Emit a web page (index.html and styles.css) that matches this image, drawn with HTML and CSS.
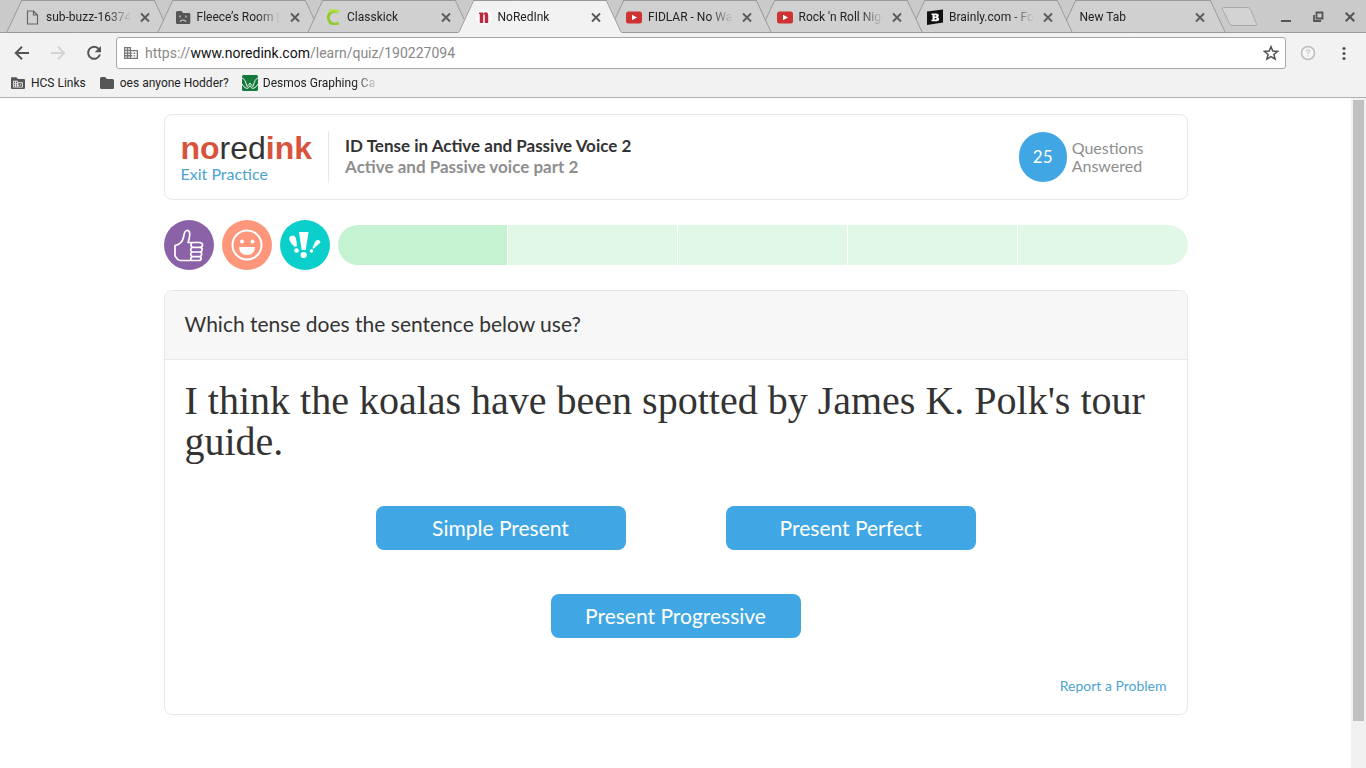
FILE: index.html
```html
<!DOCTYPE html>
<html lang="en">
<head>
<meta charset="utf-8">
<title>NoRedInk</title>
<link rel="stylesheet" href="styles.css">
</head>
<body>
<svg class="defs" aria-hidden="true">
  <symbol id="close" viewBox="0 0 16 16"><path d="M4 4.500l8 8M12 4.500l-8 8" fill="none" stroke="#5a5a5a" stroke-width="1.800"/></symbol>
  <symbol id="youtube" viewBox="0 0 16 16"><rect y="2.500" width="16" height="12" rx="2.500" fill="#cf3233"/><path d="M6 5.700v5.500l5-2.700z" fill="#fff"/></symbol>
</svg>
<header class="browser">
  <div class="strip">
    <nav class="tabs" aria-label="Tabs">
      <div class="tab level-1">
        <svg class="icon" viewBox="0 0 16 16"><path d="M3.500 2h6l4 4v9h-10zM9.500 2v4h4" fill="none" stroke="#666" stroke-width="1.200"/></svg>
        <a class="tab-title" href="#">sub-buzz-16374</a>
        <button class="icon-button" aria-label="Close tab"><svg class="icon"><use href="#close"/></svg></button>
      </div>
      <div class="tab level-2">
        <svg class="icon" viewBox="0 0 16 16"><path d="M1 3.500q0-1.500 1.500-1.500h4l1.500 2h6q1.300 0 1.300 1.300V14q0 1-1.300 1H2.300Q1 15 1 13.700z" fill="#555"/><path d="M5 6.500v2M11 6.500v2M5 12.500q3-3 6 0" fill="none" stroke="#ddd" stroke-width="1.100"/></svg>
        <a class="tab-title" href="#">Fleece’s Room |</a>
        <button class="icon-button" aria-label="Close tab"><svg class="icon"><use href="#close"/></svg></button>
      </div>
      <div class="tab level-3">
        <svg class="icon" viewBox="0 0 16 16"><path d="M13.500 3.200A6.500 6.500 0 1 0 13.500 14" fill="none" stroke="#8fcb2c" stroke-width="3"/><path d="M13.500 3.200A6.500 6.500 0 0 0 4 3" fill="none" stroke="#b3e04c" stroke-width="2.500"/></svg>
        <a class="tab-title" href="#">Classkick</a>
        <button class="icon-button" aria-label="Close tab"><svg class="icon"><use href="#close"/></svg></button>
      </div>
      <div class="tab active">
        <svg class="icon" viewBox="0 0 16 16"><circle cx="8" cy="8.500" r="8" fill="#fafafa"/><path d="M4 3.500h3v1.300q.8-1.600 2.500-1.600Q12.200 3.200 12.200 6.500V14H8.800V6.500Q8.800 5 8 5T7.200 6.500V14H3.800V5H3V3.500z" fill="#b9293c"/></svg>
        <a class="tab-title" href="#">NoRedInk</a>
        <button class="icon-button" aria-label="Close tab"><svg class="icon"><use href="#close"/></svg></button>
      </div>
      <div class="tab level-3">
        <svg class="icon"><use href="#youtube"/></svg>
        <a class="tab-title" href="#">FIDLAR - No Wa</a>
        <button class="icon-button" aria-label="Close tab"><svg class="icon"><use href="#close"/></svg></button>
      </div>
      <div class="tab level-2">
        <svg class="icon"><use href="#youtube"/></svg>
        <a class="tab-title" href="#">Rock 'n Roll Nigg</a>
        <button class="icon-button" aria-label="Close tab"><svg class="icon"><use href="#close"/></svg></button>
      </div>
      <div class="tab level-1">
        <svg class="icon" viewBox="0 0 16 16"><path d="M0 2.500L16 .5v13L0 16z" fill="#111"/><path d="M4.500 4.500h5q2.300 0 2.300 2 0 1.300-1 1.700 1.400.4 1.400 1.900 0 2.200-2.500 2.200H4.500v-1.500h1V6h-1zM7.600 6.200v1.400h1q.8 0 .8-.7t-.8-.7zM7.600 9v1.500h1.200q.8 0 .8-.7T8.800 9z" fill="#fff" fill-rule="evenodd"/></svg>
        <a class="tab-title" href="#">Brainly.com - Fo</a>
        <button class="icon-button" aria-label="Close tab"><svg class="icon"><use href="#close"/></svg></button>
      </div>
      <div class="tab level-0">
        <a class="tab-title" href="#">New Tab</a>
        <button class="icon-button" aria-label="Close tab"><svg class="icon"><use href="#close"/></svg></button>
      </div>
    </nav>
    <button class="new-tab" aria-label="New tab"><svg width="40" height="22" viewBox="0 0 40 22"><path d="M3.500 1.500h24q2 0 3 2l6 14q1 2-1 2h-23q-2 0-3-2l-7-14q-1-2 1-2z" fill="#d3d3d3" stroke="#a9a9a9"/></svg></button>
    <div class="window-controls">
      <button class="icon-button" aria-label="Minimize"><svg class="icon" viewBox="0 0 16 16"><path d="M3 12h10" stroke="#555" stroke-width="2"/></svg></button>
      <button class="icon-button" aria-label="Restore"><svg class="icon" viewBox="0 0 16 16"><path d="M6.500 3.500h6v6h-6zM4 6v6h7" fill="none" stroke="#555" stroke-width="1.800"/></svg></button>
      <button class="icon-button" aria-label="Close window"><svg class="icon" viewBox="0 0 16 16"><path d="M3.700 3.700l8.600 8.600M12.300 3.700l-8.600 8.600" stroke="#555" stroke-width="2"/></svg></button>
    </div>
  </div>
  <div class="toolbar">
    <button class="tool" aria-label="Back"><svg width="16" height="16" viewBox="0 0 16 16"><path d="M15 8H2M8 1.800L1.800 8 8 14.200" fill="none" stroke="#555" stroke-width="2"/></svg></button>
    <button class="tool" aria-label="Forward" disabled><svg width="16" height="16" viewBox="0 0 16 16"><path d="M1 8h13M8 1.800L14.200 8 8 14.200" fill="none" stroke="#d3d3d3" stroke-width="2"/></svg></button>
    <button class="tool" aria-label="Reload"><svg width="16" height="16" viewBox="0 0 16 16"><path d="M12.800 4A6 6 0 1 0 13.900 9.500" fill="none" stroke="#555" stroke-width="2"/><path d="M15 1v6.300H8.700z" fill="#555"/></svg></button>
    <div class="omnibox">
      <svg class="icon" viewBox="0 0 16 16"><path d="M1 2h7v3h7v9H1z" fill="#777"/><path d="M2.200 3.300h1.600v1.400H2.200zM5.200 3.300h1.600v1.400H5.200zM2.200 6h1.600v1.400H2.200zM5.200 6h1.600v1.400H5.200zM2.200 8.700h1.600v1.400H2.200zM5.200 8.700h1.600v1.400H5.200zM2.200 11.400h1.600v1.400H2.200zM5.200 11.400h1.600v1.400H5.200zM8 6.300h5.700v6.400H8v-1.300h1.300v-1.300H8V8.700h1.300V7.400H8z" fill="#fff"/><path d="M10.700 7.600h1.500v1.400h-1.500zM10.700 10.200h1.500v1.400h-1.500z" fill="#777"/></svg>
      <a class="url" href="#">https://<strong>www.noredink.com</strong>/learn/quiz/190227094</a>
      <button class="icon-button" aria-label="Bookmark this page"><svg class="icon" viewBox="0 0 16 16"><path d="M8 1.700l1.800 4.400 4.700.4-3.600 3 1.200 4.600L8 11.600l-4.100 2.500 1.200-4.600-3.600-3 4.700-.4z" fill="none" stroke="#505050" stroke-width="1.500"/></svg></button>
    </div>
    <button class="tool" aria-label="Extension"><svg width="16" height="16" viewBox="0 0 16 16"><circle cx="8" cy="8" r="6.500" fill="#f5f5f5" stroke="#bbb" stroke-width="1.500"/><path d="M6.300 6.500q0-1.700 1.700-1.700t1.700 1.500Q9.700 7.500 8 8.200v1M8 10.300v1.200" fill="none" stroke="#bbb"/></svg></button>
    <button class="tool" aria-label="Menu"><svg width="16" height="16" viewBox="0 0 16 16"><g fill="#555"><circle cx="8" cy="3.500" r="1.600"/><circle cx="8" cy="8.500" r="1.600"/><circle cx="8" cy="13.500" r="1.600"/></g></svg></button>
  </div>
  <nav class="bookmarks" aria-label="Bookmarks">
    <a href="#"><svg class="icon" viewBox="0 0 16 16"><path d="M1 3.200Q1 2.200 2 2.200h4.500L8 4h6q1 0 1 1v8q0 1-1 1H2q-1 0-1-1z" fill="#555"/><path d="M3.200 5.800h4.600v1.500h5v5.200H3.200z" fill="#f2f2f2"/><path d="M4 6.800h1.200v1.100H4zM6 6.800h1.200v1.100H6zM4 8.700h1.200v1.100H4zM6 8.700h1.200v1.100H6zM4 10.600h1.200v1.100H4zM6 10.600h1.200v1.100H6zM8.200 8.300h3.700v3.400H8.200v-1h1v-.9h-1z" fill="#555"/><path d="M10 9.300h1v1.200h-1z" fill="#f2f2f2"/></svg>HCS Links</a>
    <a href="#"><svg class="icon" viewBox="0 0 16 16"><path d="M1 3.500Q1 2 2.500 2h3.700L8 4h5.500Q15 4 15 5.500v7q0 1.500-1.500 1.500h-11Q1 14 1 12.500z" fill="#555"/></svg>oes anyone Hodder?</a>
    <a href="#"><svg class="icon" viewBox="0 0 16 16"><rect width="16" height="16" rx="1.500" fill="#16793c"/><path d="M0 3q3 .5 5 8.500Q6.500 10.500 8 8q1.500 2.500 3 3.500Q13 3.500 16 3M0 9q2 4 5 4.500Q7 13 8 10.500q1 2.500 3 3Q14 13 16 9" fill="none" stroke="#e4f3e8" stroke-width="1"/></svg><span class="fade">Desmos Graphing Ca</span></a>
  </nav>
</header>
<div class="viewport">
  <main class="page">
    <header class="card lesson">
      <div class="brand">
        <div class="logo"><b>no</b>red<b>ink</b></div>
        <a href="#">Exit Practice</a>
      </div>
      <div class="lesson-text">
        <h1>ID Tense in Active and Passive Voice 2</h1>
        <p>Active and Passive voice part 2</p>
      </div>
      <div class="answered"><span class="count">25</span><span>Questions<br>Answered</span></div>
    </header>
    <section class="progress" aria-label="Progress">
      <svg class="badge" viewBox="0 0 50 50"><circle cx="25" cy="25" r="25" fill="#8b61a8"/><path d="M11 25.500q7-1.500 8.500-8 .8-6.500 3.200-7 3.300-.5 3 4.500-.2 3.500-1.700 7.500h12q2.500.5 2.500 2.500t-2.500 2.300q2.300.5 2.200 2.400t-2.300 2.300q1.900.5 1.800 2.300t-1.900 2.300q1.500.5 1.400 2.100-.2 1.800-2.700 1.800H17q-2.500 0-3.700-1.500L11 36zM38 27.300H29q-2-.2-2-2.300t2-2.500M37 32h-8.500q-1.800-.4-1.800-2.300t2-2.400M36 36.600h-7.500q-1.800-.4-1.800-2.300t1.800-2.300M28.500 36.600q-1.800.4-1.800 2t1.800 1.900" fill="none" stroke="#fff" stroke-width="1.700" stroke-linejoin="round"/></svg>
      <svg class="badge" viewBox="0 0 50 50"><circle cx="25" cy="25" r="25" fill="#fd967a"/><circle cx="25" cy="25" r="14.500" fill="none" stroke="#fff" stroke-width="2"/><circle cx="20" cy="21.500" r="2" fill="#fff"/><circle cx="30.500" cy="21.500" r="2" fill="#fff"/><path d="M17 27h16q-.5 8-8 8t-8-8z" fill="#fff"/></svg>
      <svg class="badge" viewBox="0 0 50 50"><circle cx="25" cy="25" r="25" fill="#0bcfcb"/><g fill="#fff"><path d="M19 12h9.500l-2.800 18h-4z"/><circle cx="23.700" cy="35" r="3.100"/><path d="M10 16.500q4-2.500 5.800 1.500 1 3 1 8.500l-2.300.3q-3.500-3.300-4.900-6.300-1-2.500.4-4z"/><circle cx="16.500" cy="30.500" r="2.300"/><path d="M40.500 22.500l-7 6.300-1.200-.8 3-6.500q1-1.800 3-1.500t2.200 2.500z"/><circle cx="31.500" cy="31" r="1.800"/></g></svg>
      <div class="bar"><span class="done"></span><span></span><span></span><span></span><span></span></div>
    </section>
    <section class="card question">
      <h2>Which tense does the sentence below use?</h2>
      <div class="question-body">
        <p class="sentence">I think the koalas have been spotted by James K. Polk's tour guide.</p>
        <div class="answers">
          <button>Simple Present</button>
          <button>Present Perfect</button>
          <button>Present Progressive</button>
        </div>
        <a class="report" href="#">Report a Problem</a>
      </div>
    </section>
  </main>
  <div class="scrollbar" aria-hidden="true"><div class="thumb"></div></div>
</div>
</body>
</html>
```
FILE: styles.css
```css
* { box-sizing: border-box; }
body {
  margin: 0;
  min-height: 100vh;
  display: flex;
  flex-direction: column;
  background: #fff;
  color: #333;
  font-family: Lato, sans-serif;
}
a { color: #4ba3d1; text-decoration: none; }
button { border: 0; padding: 0; background: none; font: inherit; cursor: pointer; }
h1, h2, p { margin: 0; }
svg { display: block; flex: none; }
.defs { position: absolute; width: 0; height: 0; }
.icon { width: 16px; height: 16px; }
.icon-button { flex: none; display: flex; }

/* Browser frame */
.browser {
  background: #f2f2f2;
  border-bottom: 1px solid #b0b0b0;
  font: 12px/16px Roboto, sans-serif;
  color: #222;
}
.strip {
  display: flex;
  align-items: center;
  height: 33px;
  padding-left: 6px;
  background: #cacaca;
  box-shadow: inset 0 -1px #9b9b9b;
}
.tabs { flex: 1; display: flex; height: 33px; padding-right: 14px; }
.tab {
  position: relative;
  isolation: isolate;
  flex: 1 1 0;
  min-width: 0;
  margin-right: -14px;
  padding: 1px 18px;
  display: flex;
  align-items: center;
  gap: 6px;
}
.tab::before, .tab::after {
  content: "";
  position: absolute;
  z-index: -1;
  top: 0;
  bottom: 0;
  width: 55%;
  background: #d0d0d0;
  border: solid #999;
}
.tab::before {
  left: 0;
  border-width: 1px 0 1px 1px;
  transform: skewX(-25deg);
  transform-origin: bottom left;
}
.tab::after {
  right: 0;
  border-width: 1px 1px 1px 0;
  transform: skewX(25deg);
  transform-origin: bottom right;
}
.active::before, .active::after { background: #f2f2f2; border-bottom-color: #f2f2f2; }
.active { z-index: 4; }
.level-3 { z-index: 3; }
.level-2 { z-index: 2; }
.level-1 { z-index: 1; }
.level-0 { z-index: 0; padding-left: 20px; }
.tab-title, .fade {
  overflow: hidden;
  white-space: nowrap;
  mask-image: linear-gradient(to left, transparent, #000 24px);
}
.tab-title { flex: 1; color: #222; }
.new-tab { margin: 0 18px 0 -6px; }
.window-controls { display: flex; gap: 16px; padding-right: 8px; }

.toolbar { display: flex; align-items: center; gap: 20px; padding: 4px 14px 0; }
.omnibox {
  flex: 1;
  display: flex;
  align-items: center;
  gap: 6px;
  height: 32px;
  margin-left: -6px;
  margin-right: -6px;
  padding: 0 6px;
  background: #fff;
  border: 1px solid #a6a6a6;
  border-radius: 3px;
}
.url { flex: 1; font-size: 14px; color: #888; }
.url strong { font-weight: 400; color: #111; }
.bookmarks { display: flex; gap: 13px; height: 28px; padding-left: 10px; }
.bookmarks a { display: flex; align-items: center; gap: 5px; color: #222; white-space: nowrap; }
.fade { width: 116px; }

/* Page */
.viewport { flex: 1; display: flex; }
.page {
  flex: 1;
  max-width: 1024px;
  margin: 0 auto;
  padding: 16px 0;
}
.card { border: 1px solid #e8e8e8; border-radius: 8px; overflow: hidden; }
.lesson {
  display: flex;
  align-items: center;
  padding: 16px 43px 16px 16px;
  font-size: 17px;
  line-height: 21px;
}
.brand { padding-right: 16px; border-right: 1px solid #e8e8e8; line-height: 18px; }
.brand a { font-size: 16px; }
.logo {
  font: 32px/34px "Liberation Sans Narrow", "Liberation Sans", sans-serif;
  color: #333;
}
.logo b { color: #d9533c; }
.lesson-text { flex: 1; padding: 0 0 2px 16px; }
.lesson h1 { font-size: inherit; }
.lesson p { color: #8e8e8e; font-weight: 700; }
.answered {
  display: flex;
  align-items: center;
  gap: 5px;
  color: #8e8e8e;
  font-size: 16px;
  line-height: 18px;
}
.count {
  width: 48px;
  height: 50px;
  border-radius: 24px;
  background: #41a7e4;
  color: #fff;
  font-size: 17px;
  line-height: 50px;
  text-align: center;
}
.progress { display: flex; align-items: center; gap: 8px; margin: 20px 0; }
.badge { width: 50px; height: 50px; }
.bar { flex: 1; display: flex; gap: 1px; height: 40px; border-radius: 20px; overflow: hidden; }
.bar span { flex: 1; background: #e1f8e6; }
.bar .done { background: #c5f2d1; }
.question h2 {
  padding: 19px 20px 21px;
  background: #f7f7f7;
  border-bottom: 1px solid #e8e8e8;
  font-size: 21px;
  font-weight: 400;
  line-height: 28px;
}
.question-body { display: flex; flex-direction: column; padding: 20px 20px 18px; }
.sentence { font: 40px/41px "Liberation Serif", serif; color: #333; }
.answers {
  align-self: center;
  display: flex;
  flex-wrap: wrap;
  justify-content: center;
  gap: 44px 100px;
  max-width: 700px;
  margin: 44px 0 38px;
}
.answers button {
  width: 250px;
  height: 44px;
  padding-bottom: 2px;
  border-radius: 8px;
  background: #41a7e4;
  color: #fff;
  font-size: 21px;
}
.report { align-self: flex-end; font-size: 14px; line-height: 20px; }
.scrollbar { width: 15px; padding: 2px 2px 0; background: #f1f1f1; }
.thumb { height: 93%; background: #c1c1c1; }
```
